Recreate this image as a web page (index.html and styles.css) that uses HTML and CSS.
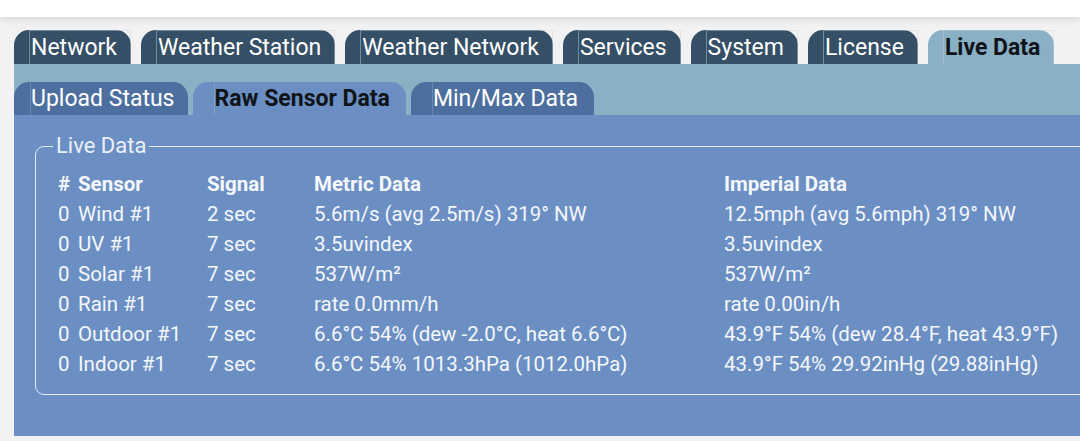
FILE: index.html
```
<!DOCTYPE html>
<html lang="en">
<head>
    <meta charset="UTF-8">
    <meta name="viewport" content="width=device-width, initial-scale=1.0">
    <title>Live Data</title>
    <link rel="stylesheet" href="styles.css">
</head>
<body>
    <div class="topbar"></div>

    <div class="page">
        <!-- main menu tabs -->
        <ul class="tabs">
            <li class="tab"><a href="#">Network</a></li>
            <li class="tab"><a href="#">Weather Station</a></li>
            <li class="tab"><a href="#">Weather Network</a></li>
            <li class="tab"><a href="#">Services</a></li>
            <li class="tab"><a href="#">System</a></li>
            <li class="tab"><a href="#">License</a></li>
            <li class="tab active"><a href="#">Live Data</a></li>
        </ul>

        <div class="subbar">
            <ul class="subtabs">
                <li class="subtab"><a href="#">Upload Status</a></li>
                <li class="subtab active"><a href="#">Raw Sensor Data</a></li>
                <li class="subtab"><a href="#">Min/Max Data</a></li>
            </ul>
        </div>

        <div class="panel">
            <fieldset class="live">
                <legend>Live Data</legend>
                <table class="sensors">
                    <thead>
                        <tr>
                            <th class="num">#</th>
                            <th class="name">Sensor</th>
                            <th class="signal">Signal</th>
                            <th class="metric">Metric Data</th>
                            <th>Imperial Data</th>
                        </tr>
                    </thead>
                    <tbody>
                        <tr>
                            <td class="num">0</td>
                            <td>Wind #1</td>
                            <td>2 sec</td>
                            <td>5.6m/s (avg 2.5m/s) 319° NW</td>
                            <td>12.5mph (avg 5.6mph) 319° NW</td>
                        </tr>
                        <tr>
                            <td class="num">0</td>
                            <td>UV #1</td>
                            <td>7 sec</td>
                            <td>3.5uvindex</td>
                            <td>3.5uvindex</td>
                        </tr>
                        <tr>
                            <td class="num">0</td>
                            <td>Solar #1</td>
                            <td>7 sec</td>
                            <td>537W/m²</td>
                            <td>537W/m²</td>
                        </tr>
                        <tr>
                            <td class="num">0</td>
                            <td>Rain #1</td>
                            <td>7 sec</td>
                            <td>rate 0.0mm/h</td>
                            <td>rate 0.00in/h</td>
                        </tr>
                        <tr>
                            <td class="num">0</td>
                            <td>Outdoor #1</td>
                            <td>7 sec</td>
                            <td>6.6°C 54% (dew -2.0°C, heat 6.6°C)</td>
                            <td>43.9°F 54% (dew 28.4°F, heat 43.9°F)</td>
                        </tr>
                        <tr>
                            <td class="num">0</td>
                            <td>Indoor #1</td>
                            <td>7 sec</td>
                            <td>6.6°C 54% 1013.3hPa (1012.0hPa)</td>
                            <td>43.9°F 54% 29.92inHg (29.88inHg)</td>
                        </tr>
                    </tbody>
                </table>
            </fieldset>
        </div>
    </div>
</body>
</html>
```

FILE: styles.css
```
body {
    background-color: #f2f2f2;
    color: #ffffff;
    font-family: Roboto, 'Noto Sans', sans-serif;
    margin: 0;
    padding: 0;
    overflow: hidden;
}

a {
    color: inherit;
    text-decoration: none;
}

/* white strip at the top with its soft shadow */
.topbar {
    height: 17px;
    background-color: #ffffff;
    box-shadow: 0 2px 8px rgba(0, 0, 0, 0.12);
}

.page {
    margin-top: 13px;
    margin-left: 14px;
    width: 1100px;
}

/* main menu */
.tabs {
    display: flex;
    gap: 10px;
    list-style: none;
    margin: 0;
    padding: 0;
}

.tab {
    background-color: #354f66;
    border-radius: 15px 15px 0 0;
    padding-left: 15px;
}

.tab a {
    display: block;
    height: 33px;
    line-height: 34px;
    font-size: 23px;
    padding: 0 13px 0 1px;
    border: 1px solid rgba(200, 210, 220, 0.45);
    border-bottom: none;
}

.tab.active {
    background-color: #89b0c4;
}

.tab.active a {
    color: #101418;
    font-weight: bold;
}

/* second row of tabs */
.subbar {
    background-color: #89b0c4;
    padding-top: 18px;
}

.subtabs {
    display: flex;
    gap: 5px;
    list-style: none;
    margin: 0;
    padding: 0;
}

.subtab {
    background-color: #4c6f9f;
    border-radius: 15px 15px 0 0;
    padding-left: 21px;
}

.subtab:first-child {
    padding-left: 16px;
}

.subtab a {
    display: block;
    height: 33px;
    line-height: 33px;
    font-size: 23px;
    padding: 0 16px 0 0;
    border-left: 1px solid rgba(200, 210, 220, 0.25);
}

.subtab:first-child a {
    padding-right: 13px;
}

.subtab.active {
    background-color: #6b8fc3;
}

.subtab.active a {
    color: #101418;
    font-weight: bold;
}

/* content panel */
.panel {
    background-color: #6b8fc3;
    padding: 19px 0 41px 21px;
}

.live {
    border: 1.5px solid #e4ebf5;
    border-radius: 9px;
    margin: 0;
    padding: 0 0 15px 4px;
}

.live legend {
    color: #eaf0f8;
    font-size: 22px;
    line-height: 24px;
    padding: 0 3px;
    margin-left: 13px;
}

.sensors {
    border-collapse: collapse;
    margin: 11px 0 0 18px;
    font-size: 20.5px;
    color: #f4f7fb;
}

.sensors th,
.sensors td {
    height: 30px;
    padding: 0;
    text-align: left;
    white-space: nowrap;
}

.sensors th {
    font-weight: bold;
}

.sensors .num {
    width: 20px;
}

.sensors .name {
    width: 129px;
}

.sensors .signal {
    width: 107px;
}

.sensors .metric {
    width: 410px;
}
```
